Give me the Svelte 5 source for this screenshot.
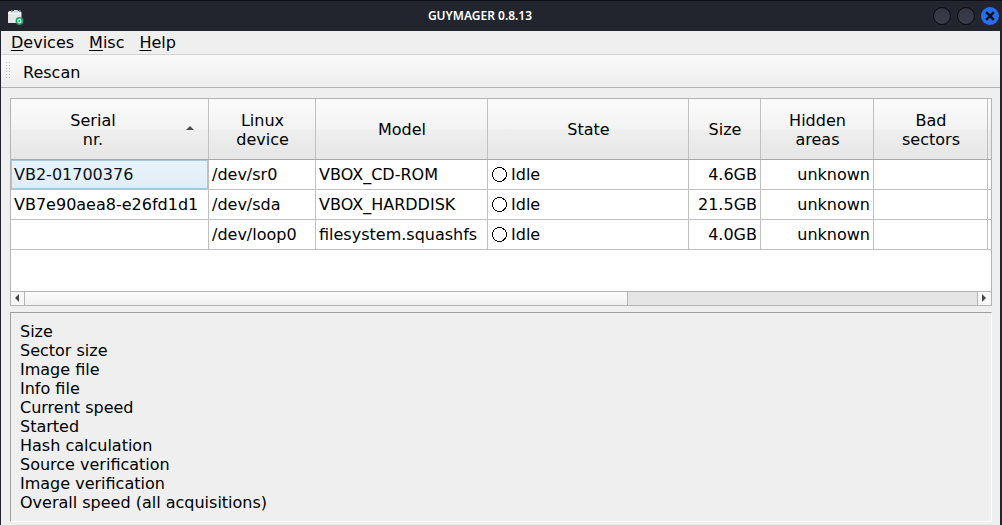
<script>
  const menus = ['Devices', 'Misc', 'Help'];
  const columns = [
    { lines: ['Serial', 'nr.'], sorted: true },
    { lines: ['Linux', 'device'] },
    { lines: ['Model'] },
    { lines: ['State'] },
    { lines: ['Size'] },
    { lines: ['Hidden', 'areas'] },
    { lines: ['Bad', 'sectors'] },
    { lines: [] }
  ];
  const devices = [
    { serial: 'VB2-01700376', path: '/dev/sr0', model: 'VBOX_CD-ROM', state: 'Idle', size: '4.6GB', hidden: 'unknown' },
    { serial: 'VB7e90aea8-e26fd1d1', path: '/dev/sda', model: 'VBOX_HARDDISK', state: 'Idle', size: '21.5GB', hidden: 'unknown' },
    { serial: '', path: '/dev/loop0', model: 'filesystem.squashfs', state: 'Idle', size: '4.0GB', hidden: 'unknown' }
  ];
  const info = [
    'Size', 'Sector size', 'Image file', 'Info file', 'Current speed', 'Started',
    'Hash calculation', 'Source verification', 'Image verification',
    'Overall speed (all acquisitions)'
  ];
</script>

<div class="window">
  <header class="title">
    <svg class="logo" width="17" height="17" viewBox="0 0 17 17">
      <path d="M1 4 2.500 3H13l1.500 1.500V15H1z" fill="#e6e6e5" />
      <path d="M4 2h1.500v2H4zM12 2h1.500v2H12z" fill="#7c818b" />
      <path d="M7 2h3.500l1.500 3H6z" fill="#c6ddf2" />
      <path d="M1 5.500h13" stroke="#fafafa" />
      <circle cx="12.500" cy="13" r="3.900" fill="#12a566" />
      <path d="M14 11.900c-1.200-1.400-3.200-.7-3.200 1.100s2 2.400 3.200 1.200V13h-1.400" fill="none" stroke="#d9fbe9" stroke-width="1.100" />
    </svg>
    <h1>GUYMAGER 0.8.13</h1>
    <div class="buttons">
      <i></i><i></i>
      <i class="close"><svg width="18" height="18" viewBox="0 0 18 18"><path d="M6 6l6 6M12 6l-6 6" stroke="#10131c" stroke-width="2.500" stroke-linecap="square" /></svg></i>
    </div>
  </header>

  <div class="body">
    <nav>
      {#each menus as m}<span><u>{m[0]}</u>{m.slice(1)}</span>{/each}
    </nav>
    <div class="toolbar">
      <svg width="5" height="18" viewBox="0 0 5 18">
        {#each [0, 3, 6, 9, 12, 15] as y}
          <path d="M1 {y + .5}h1M4 {y + .5}h1" stroke="#b8b8b8" />
        {/each}
      </svg>
      <span>Rescan</span>
    </div>

    <main>
      <section class="table">
        <div class="row head">
          {#each columns as c}
            <div class="cell" class:sorted={c.sorted}>
              <div>{#each c.lines as l}<div>{l}</div>{/each}</div>
              {#if c.sorted}
                <svg width="8" height="4" viewBox="0 0 8 4"><path d="M0 4 4 0l4 4z" fill="#4b4b4b" /></svg>
              {/if}
            </div>
          {/each}
        </div>
        {#each devices as d, i}
          <div class="row">
            <div class="cell" class:selected={i === 0}>{d.serial}</div>
            <div class="cell">{d.path}</div>
            <div class="cell">{d.model}</div>
            <div class="cell state">
              <svg width="15" height="15" viewBox="0 0 15 15"><circle cx="7.500" cy="7.500" r="7" fill="#fff" stroke="#000" shape-rendering="crispEdges" /></svg>{d.state}
            </div>
            <div class="cell right">{d.size}</div>
            <div class="cell right">{d.hidden}</div>
            <div class="cell"></div>
            <div class="cell"></div>
          </div>
        {/each}
        <div class="empty"></div>
        <div class="scroll">
          <div class="arrow"><svg width="4" height="8" viewBox="0 0 4 8"><path d="M4 0v8L0 4z" fill="#484848" /></svg></div>
          <div class="thumb"></div>
          <div class="track"></div>
          <div class="arrow"><svg width="4" height="8" viewBox="0 0 4 8"><path d="M0 0v8l4-4z" fill="#484848" /></svg></div>
        </div>
      </section>
      <section class="info">
        {#each info as line}<div>{line}</div>{/each}
      </section>
    </main>
  </div>
</div>

<style>
  :global(body) { margin: 0; overflow: hidden; }
  * { box-sizing: border-box; }
  .window {
    width: 1002px; height: 525px; padding: 0 2px 0 1px;
    display: flex; flex-direction: column;
    background: #23252e; color: #000;
    font: 16px/19px "DejaVu Sans", sans-serif;
  }
  .title {
    flex: none; height: 31px; margin: 0 -2px 0 -1px; border-top: 1px solid #101116;
    display: grid; grid-template-columns: 24px 1fr 70px; align-items: center;
  }
  .logo { margin-left: 7px; }
  h1 { margin: 0; padding-left: 4px; text-align: center; color: #fff; font: 600 12px/16px "Noto Sans", sans-serif; }
  .buttons { display: flex; gap: 6px; justify-self: end; padding-right: 3px; }
  .buttons i { width: 18px; height: 18px; border: 1px solid #08090c; border-radius: 50%; background: linear-gradient(#323541, #3b3e4b); }
  .buttons .close { border: 0; background: #256ff0; }
  .close svg { display: block; }
  .body { flex: 1; min-height: 0; display: flex; flex-direction: column; background: #efefef; }
  nav { height: 24px; border-bottom: 1px solid #d3d3d3; display: flex; gap: 15px; padding: 2px 0 0 10px; }
  nav u { text-decoration-thickness: 1px; text-underline-offset: 2px; }
  .toolbar {
    height: 33px; border-bottom: 1px solid #b4b4b4; background: linear-gradient(#fafafa, #ededed);
    display: flex; align-items: center; gap: 13px; padding: 2px 0 0 4px;
  }
  .toolbar svg { margin-top: -2px; }
  main { display: flex; flex-direction: column; gap: 6px; padding: 10px 8px 0 9px; }
  .table { height: 208px; border: 1px solid #b4b4b4; background: #fff; display: flex; flex-direction: column; }
  .row {
    flex: none; height: 30px; border-bottom: 1px solid #c0c0c0;
    display: grid; grid-template-columns: 198px 107px 172px 201px 72px 113px 114px 3px;
  }
  .cell { border-right: 1px solid #c0c0c0; padding: 0 3px 1px; display: flex; align-items: center; white-space: nowrap; min-width: 0; }
  .cell:last-child { border: 0; padding: 0; }
  .right { justify-content: flex-end; }
  .state { gap: 4px; padding-left: 4px; }
  .state svg { margin-top: 1px; }
  .head { height: 61px; background: linear-gradient(#fbfbfb, #f3f3f3 50%, #efefef 51%, #e6e6e6); border-color: #a8a8a8; text-align: center; }
  .head .cell { justify-content: center; padding: 1px 2px 0 3px; }
  .head .sorted { padding: 1px 14px 0 3px; }
  .sorted > div { flex: 1; padding-right: 14px; }
  .head .sorted svg { margin: -4px 0 0; }
  .selected { background: linear-gradient(#e8f4fc, #e2ecf4); box-shadow: inset 0 0 0 1px #a9c6da; color: #08121a; }
  .empty { flex: 1; }
  .scroll { flex: none; height: 14px; border-top: 1px solid #b4b4b4; display: flex; background: #e5e5e5; }
  .arrow { width: 13px; background: #f8f8f8; display: flex; align-items: center; justify-content: center; padding: 0 1px 1px 0; }
  .thumb { width: 604px; border: solid #b4b4b4; border-width: 0 1px; background: linear-gradient(#fdfdfd, #f0f0f0); }
  .track { flex: 1; border-right: 1px solid #b4b4b4; }
  .info { height: 210px; padding: 9px; border: 1px solid #fff; border-top-color: #a0a0a0; border-left-color: #a0a0a0; }
</style>
